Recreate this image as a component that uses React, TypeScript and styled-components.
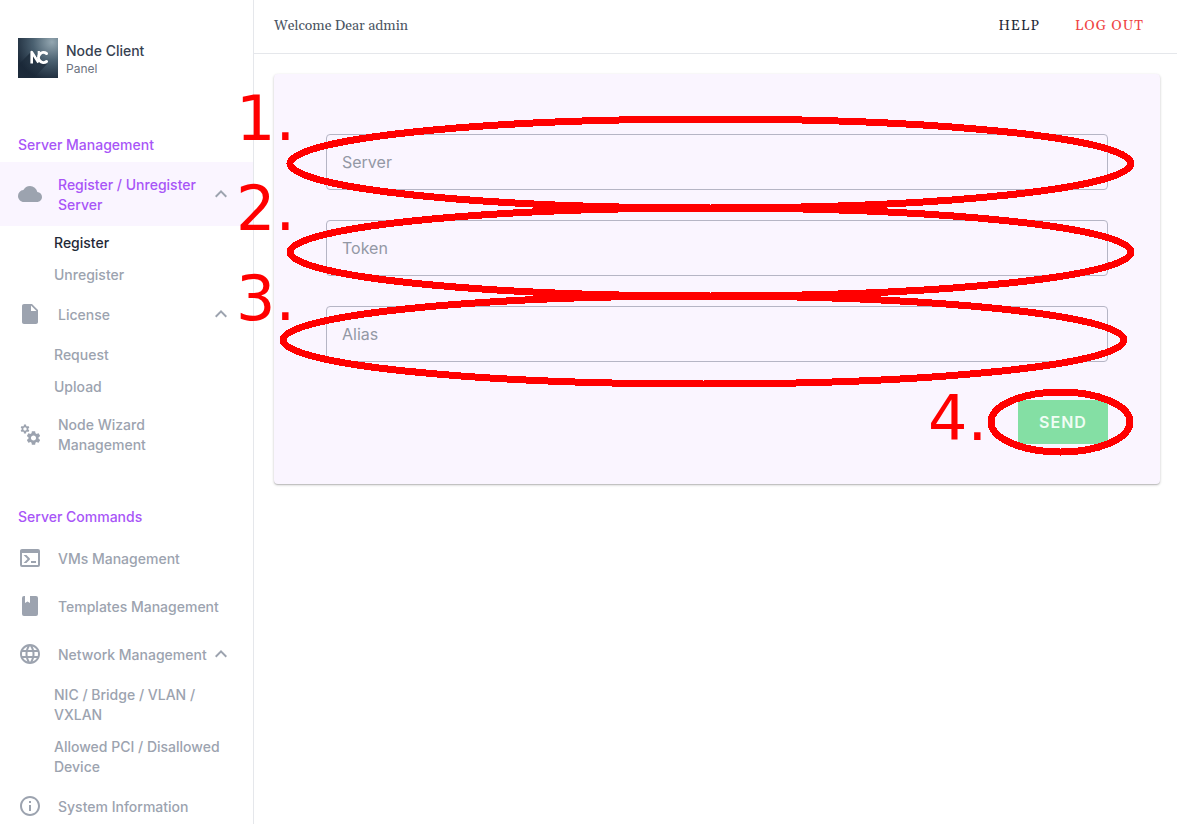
import React from "react";
import styled, { createGlobalStyle } from "styled-components";
import {
  MdCloud,
  MdInsertDriveFile,
  MdSettings,
  MdLanguage,
  MdInfoOutline,
  MdKeyboardArrowUp,
} from "react-icons/md";

const GlobalStyle = createGlobalStyle`
  *, *::before, *::after { box-sizing: border-box; }
  body {
    margin: 0;
    background: #fff;
    font-family: Inter, "Liberation Sans", sans-serif;
    font-size: 14px;
    line-height: 20px;
    color: #9ca3af;
  }
  a { color: inherit; text-decoration: none; }
  button, input { font: inherit; }
`;

const Page = styled.div`
  display: grid;
  grid-template-columns: 254px minmax(0, 1fr);
  height: 100vh;
  overflow: hidden;
`;

const Sidebar = styled.aside`
  border-right: 1px solid #e5e7eb;
  overflow: hidden;
  font-weight: 500;
`;

const Brand = styled.div`
  display: flex;
  align-items: center;
  gap: 8px;
  padding: 38px 18px 0;
`;

const BrandText = styled.div`
  padding-top: 2px;
`;

const BrandName = styled.div`
  color: #374151;
`;

const BrandSub = styled.div`
  color: #6b7280;
  font-size: 12px;
  line-height: 16px;
  font-weight: 400;
`;

const SectionTitle = styled.h2<{ $top: number }>`
  margin: ${(p) => p.$top}px 18px 7px;
  font-size: 14px;
  line-height: 20px;
  font-weight: 500;
  color: #a855f7;
`;

const MenuItem = styled.button<{ $active?: boolean }>`
  display: flex;
  align-items: center;
  width: 100%;
  padding: 12px 20px 12px 18px;
  border: 0;
  background: ${(p) => (p.$active ? "#faf5ff" : "transparent")};
  color: ${(p) => (p.$active ? "#a855f7" : "inherit")};
  font-weight: 500;
  text-align: left;
  white-space: nowrap;
  svg { flex: none; color: #9ca3af; }
`;

const MenuLabel = styled.span`
  flex: 1;
  padding: 1px 0 0 16px;
  margin-bottom: -1px;
  white-space: pre-line;
`;

const SubMenu = styled.nav`
  display: flex;
  flex-direction: column;
  gap: 12px;
  padding: 7px 18px 5px 54px;
`;

const SubLink = styled.a<{ $current?: boolean }>`
  color: ${(p) => (p.$current ? "#1f2937" : "inherit")};
`;

const Main = styled.main`
  min-width: 0;
`;

const TopBar = styled.header`
  display: flex;
  align-items: center;
  justify-content: space-between;
  height: 54px;
  padding: 0 33px 2px 20px;
  border-bottom: 1px solid #e5e7eb;
  font-family: Gelasio, Georgia, "Liberation Serif", serif;
  color: #4b5563;
`;

const TopLinks = styled.nav`
  display: flex;
  gap: 35px;
  letter-spacing: 1px;
`;

const TopLink = styled.a<{ $danger?: boolean }>`
  color: ${(p) => (p.$danger ? "#ef4444" : "#1f2937")};
`;

const Card = styled.form`
  display: flex;
  flex-direction: column;
  gap: 30px;
  margin: 20px 17px 0 20px;
  padding: 60px 52px 40px;
  border-radius: 4px;
  background: #faf5ff;
  box-shadow: 0 1px 3px rgba(0, 0, 0, 0.2), 0 1px 1px rgba(0, 0, 0, 0.14);
`;

const Field = styled.label`
  position: relative;
  display: block;
`;

const TextInput = styled.input`
  display: block;
  width: 100%;
  height: 56px;
  padding: 0 15px;
  border: 1px solid #b5b5c5;
  border-radius: 4px;
  background: transparent;
  font-size: 16px;
  color: #374151;
  &::placeholder { color: #9398a5; opacity: 1; }
`;

const Actions = styled.div`
  position: relative;
  align-self: flex-end;
  margin-top: 8px;
`;

const SendButton = styled.button`
  display: block;
  width: 90px;
  height: 44px;
  padding: 0;
  border: 0;
  background: #84dfa4;
  color: #f0fdf4;
  font-size: 16px;
  font-weight: 600;
  letter-spacing: 1px;
`;

const StepNumber = styled.span<{ $top: number }>`
  position: absolute;
  left: -90px;
  top: ${(p) => p.$top}px;
  font-family: "DejaVu Sans", sans-serif;
  font-size: 62px;
  line-height: 62px;
  font-weight: 400;
  color: #f00;
  pointer-events: none;
`;

const RingBox = styled.div<{ $inset: string }>`
  position: absolute;
  inset: ${(p) => p.$inset};
  pointer-events: none;
  svg { display: block; width: 100%; height: 100%; overflow: visible; }
`;

function Highlight({ inset }: { inset: string }) {
  return (
    <RingBox $inset={inset}>
      <svg aria-hidden="true">
        <ellipse cx="50%" cy="50%" rx="50%" ry="50%" fill="none" stroke="#f00" strokeWidth="7" shapeRendering="crispEdges" />
      </svg>
    </RingBox>
  );
}

function ConsoleIcon() {
  return (
    <svg width="24" height="24" viewBox="0 0 24 24" fill="currentColor" aria-hidden="true">
      <path d="M20 19V7H4v12h16m0-16a2 2 0 0 1 2 2v14a2 2 0 0 1-2 2H4a2 2 0 0 1-2-2V5c0-1.110.9-2 2-2h16m-7 14v-2h5v2h-5m-3.420-4L5.570 9H8.400l3.300 3.300c.39.39.39 1.030 0 1.420L8.420 17H5.590l3.990-4z" />
    </svg>
  );
}

function BookIcon() {
  return (
    <svg width="24" height="24" viewBox="0 0 24 24" fill="currentColor" aria-hidden="true">
      <path d="M18 22a2 2 0 0 0 2-2V4a2 2 0 0 0-2-2h-6v7L9.500 7.500 7 9V2H6a2 2 0 0 0-2 2v16a2 2 0 0 0 2 2h12z" />
    </svg>
  );
}

function GearsIcon() {
  return (
    <svg width="24" height="24" viewBox="0 0 24 24" aria-hidden="true">
      <MdSettings size={11} x={1.5} y={1.5} />
      <MdSettings size={17} x={7} y={7.5} />
    </svg>
  );
}

function Logo() {
  return (
    <svg width="40" height="40" viewBox="0 0 40 40" role="img" aria-label="NC logo">
      <defs>
        <radialGradient id="sky" cx="0.85" cy="0.1" r="0.95">
          <stop offset="0" stopColor="#94a7b1" />
          <stop offset="0.5" stopColor="#4a6070" />
          <stop offset="1" stopColor="#1d2b3b" />
        </radialGradient>
        <linearGradient id="shade" x1="0.7" y1="0" x2="0.2" y2="1">
          <stop offset="0" stopColor="#142130" stopOpacity="0.8" />
          <stop offset="1" stopColor="#142130" stopOpacity="0" />
        </linearGradient>
      </defs>
      <rect width="40" height="40" fill="url(#sky)" />
      <path d="M13 14 0 27V40H16L29 26Z" fill="url(#shade)" />
      <path d="M13.700 25.500V14L20.500 24.500" fill="none" stroke="#fff" strokeWidth="2.600" strokeLinejoin="round" />
      <path d="M20.800 13V18" fill="none" stroke="#fff" strokeWidth="2.200" />
      <path d="M28.500 15.500A5 5 0 1 0 28.500 23.500" fill="none" stroke="#fff" strokeWidth="3" strokeLinecap="round" />
    </svg>
  );
}

const fields = [
  { name: "Server", ring: "-15px -23px -18px -36px", top: -46 },
  { name: "Token", ring: "-12px -23px -20px -36px", top: -42 },
  { name: "Alias", ring: "-10px -16px -22px -43px", top: -38 },
];

export default function App() {
  return (
    <Page>
      <GlobalStyle />
      <Sidebar>
        <Brand>
          <Logo />
          <BrandText>
            <BrandName>Node Client</BrandName>
            <BrandSub>Panel</BrandSub>
          </BrandText>
        </Brand>

        <SectionTitle $top={57}>Server Management</SectionTitle>
        <MenuItem $active>
          <MdCloud size={24} />
          <MenuLabel>{"Register / Unregister\nServer"}</MenuLabel>
          <MdKeyboardArrowUp size={24} />
        </MenuItem>
        <SubMenu>
          <SubLink href="#register" $current>Register</SubLink>
          <SubLink href="#unregister">Unregister</SubLink>
        </SubMenu>
        <MenuItem>
          <MdInsertDriveFile size={24} />
          <MenuLabel>License</MenuLabel>
          <MdKeyboardArrowUp size={24} />
        </MenuItem>
        <SubMenu>
          <SubLink href="#request">Request</SubLink>
          <SubLink href="#upload">Upload</SubLink>
        </SubMenu>
        <MenuItem>
          <GearsIcon />
          <MenuLabel>{"Node Wizard\nManagement"}</MenuLabel>
        </MenuItem>

        <SectionTitle $top={41}>Server Commands</SectionTitle>
        <MenuItem>
          <ConsoleIcon />
          <MenuLabel>VMs Management</MenuLabel>
        </MenuItem>
        <MenuItem>
          <BookIcon />
          <MenuLabel>Templates Management</MenuLabel>
        </MenuItem>
        <MenuItem>
          <MdLanguage size={24} />
          <MenuLabel>Network Management</MenuLabel>
          <MdKeyboardArrowUp size={24} />
        </MenuItem>
        <SubMenu>
          <SubLink href="#nic">NIC / Bridge / VLAN / VXLAN</SubLink>
          <SubLink href="#pci">Allowed PCI / Disallowed Device</SubLink>
        </SubMenu>
        <MenuItem>
          <MdInfoOutline size={24} />
          <MenuLabel>System Information</MenuLabel>
        </MenuItem>
      </Sidebar>

      <Main>
        <TopBar>
          <span>Welcome Dear admin</span>
          <TopLinks>
            <TopLink href="#help">HELP</TopLink>
            <TopLink href="#logout" $danger>LOG OUT</TopLink>
          </TopLinks>
        </TopBar>
        <Card>
          {fields.map((f, i) => (
            <Field key={f.name}>
              <TextInput type="text" placeholder={f.name} aria-label={f.name} />
              <Highlight inset={f.ring} />
              <StepNumber $top={f.top}>{i + 1}.</StepNumber>
            </Field>
          ))}
          <Actions>
            <SendButton type="button">SEND</SendButton>
            <Highlight inset="-8px -22px -8px -27px" />
            <StepNumber $top={-12}>4.</StepNumber>
          </Actions>
        </Card>
      </Main>
    </Page>
  );
}
